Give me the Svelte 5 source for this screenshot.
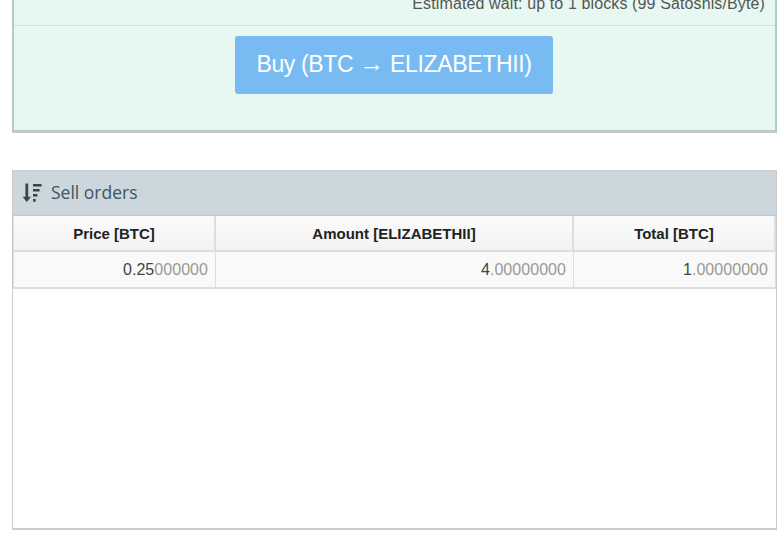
<script>
  const columns = [
    { label: 'Price [BTC]', strong: '0.25', faded: '000000' },
    { label: 'Amount [ELIZABETHII]', strong: '4', faded: '.00000000' },
    { label: 'Total [BTC]', strong: '1', faded: '.00000000' }
  ];
</script>

<div class="page">
  <section class="buy">
    <div class="wait"><span>Estimated wait: up to 1 blocks (99 Satoshis/Byte)</span></div>
    <div class="actions">
      <button type="button"><span class="label">Buy (BTC <span class="arrow">→</span> ELIZABETHII)</span></button>
    </div>
  </section>

  <section class="orders">
    <header>
      <svg width="20" height="20" viewBox="0 0 20 20" aria-hidden="true">
        <path d="M3.4 0.5h2.8v13.2H9L4.8 19 0.6 13.7h2.8z" fill="#37474f" />
        <path d="M11 1h8.6v2.6H11zM11 6h6.6v2.6H11zM11 11h4.4v2.6H11zM11 16h2.7v2.8H11z" fill="#37474f" />
      </svg>
      <span class="title">Sell orders</span>
    </header>
    <div class="grid">
      {#each columns as c}
        <div class="th">{c.label}</div>
      {/each}
      {#each columns as c}
        <div class="td">{c.strong}<span class="faded">{c.faded}</span></div>
      {/each}
    </div>
  </section>
</div>

<style>
  :global(body) {
    margin: 0;
    background: #fff;
    font-family: "Liberation Sans", Arial, sans-serif;
  }
  .page {
    height: 539px;
    padding: 0 7px 0 12px;
    box-sizing: border-box;
    overflow: hidden;
  }
  .buy {
    height: 131px;
    box-sizing: border-box;
    background: #e6f8f1;
    border: 2px solid #b3c8cf;
    border-top: 0;
    border-bottom-width: 1px;
    box-shadow: 0 2px 0 #c8c8c8;
  }
  .wait {
    height: 26px;
    box-sizing: border-box;
    border-bottom: 1px solid #cfe2dd;
    display: flex;
    justify-content: flex-end;
    align-items: flex-end;
    overflow: hidden;
    padding: 0 10px 11px 0;
    font-size: 16px;
    letter-spacing: 0.12px;
    line-height: 20px;
    color: #555;
  }
  .wait span { white-space: nowrap; }
  .actions {
    display: flex;
    justify-content: center;
    padding-top: 10px;
  }
  button {
    width: 318px;
    height: 58px;
    margin-left: -1px;
    padding: 0 0 2px;
    border: 0;
    border-radius: 3px;
    background: #77bbf2;
    color: #fff;
    font-family: inherit;
    font-size: 23px;
    letter-spacing: -0.35px;
  }
  .arrow {
    font-size: 25px;
    line-height: 1;
  }
  .orders {
    margin-top: 39px;
    height: 360px;
    box-sizing: border-box;
    border: 1px solid #ccc;
    border-bottom-width: 2px;
  }
  header {
    height: 45px;
    box-sizing: border-box;
    background: #ccd7dd;
    border-bottom: 1px solid #bfc9cd;
    display: flex;
    align-items: center;
    gap: 9px;
    padding-left: 9px;
    font-family: "Open Sans", sans-serif;
    font-size: 17.5px;
    color: #3f5560;
  }
  .title {
    margin-top: -2px;
  }
  .grid {
    display: grid;
    grid-template-columns: 202px 358px 202px;
    grid-template-rows: 36px 35px;
    width: 762px;
    border-bottom: 2px solid #ddd;
    border-left: 1px solid #ddd;
    box-sizing: content-box;
  }
  .th, .td {
    box-sizing: border-box;
    border-right: 1px solid #ddd;
    display: flex;
    align-items: center;
  }
  .th {
    justify-content: center;
    font-size: 15px;
    font-weight: 700;
    color: #222;
    background: linear-gradient(#fbfbfb, #f3f3f3);
    border-bottom: 2px solid #ddd;
    border-right-width: 2px;
  }
  .td {
    justify-content: flex-end;
    padding-right: 7px;
    color: #444;
    background: #f9f9f9;
    font-size: 16px;
    letter-spacing: 0.05px;
  }
  .faded { color: #999; }
</style>
